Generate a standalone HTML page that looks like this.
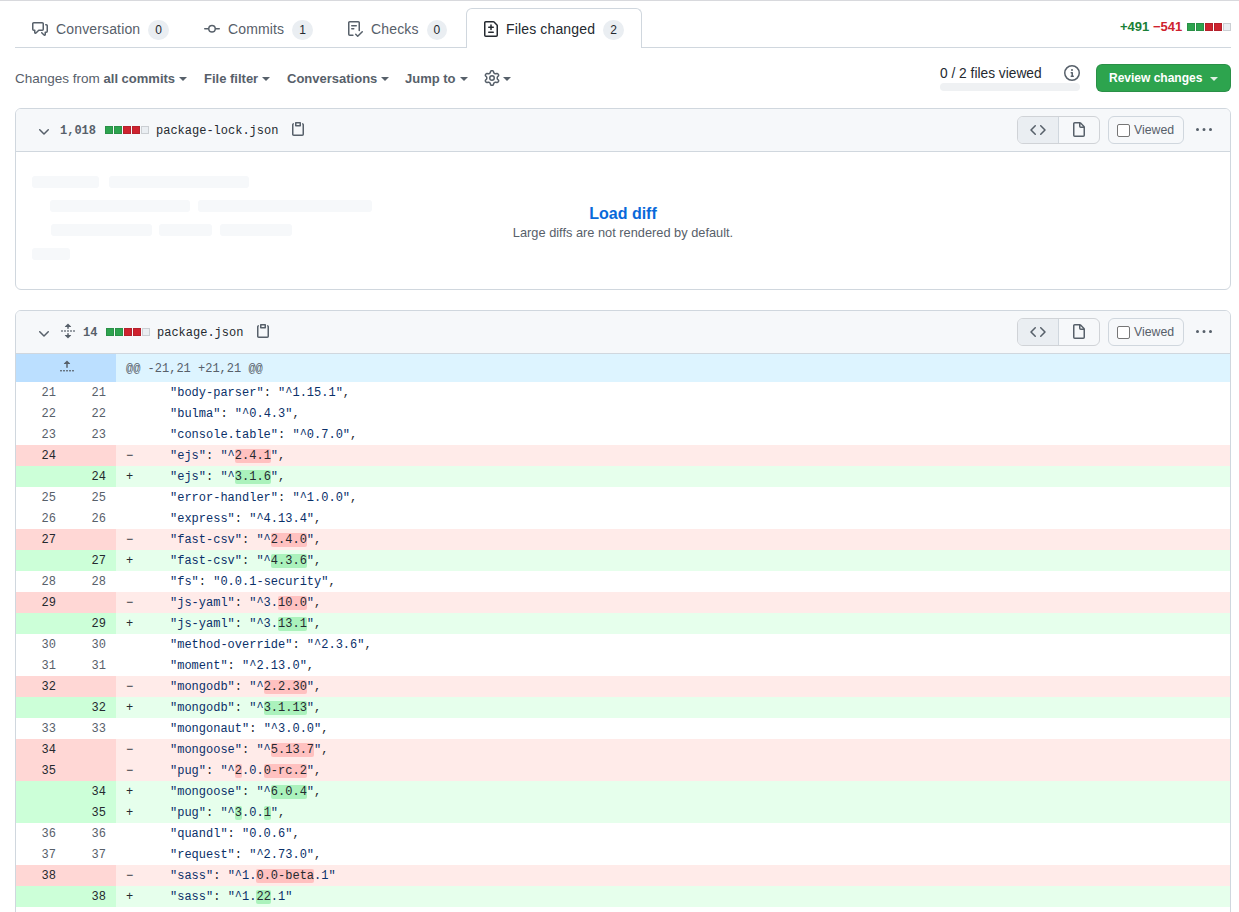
<!DOCTYPE html>
<html><head><meta charset="utf-8">
<style>
*{box-sizing:border-box}
html,body{margin:0;padding:0;background:#fff;width:1239px;height:912px;overflow:hidden;font-family:"Liberation Sans",sans-serif;color:#24292f}
.abs{position:absolute}
svg{display:block}
.topline{position:absolute;left:0;top:0;width:1239px;height:1px;background:#d8d9dd}
.tabline{position:absolute;left:15px;top:47px;width:1216px;height:1px;background:#d0d7de}
.tab{position:absolute;top:8px;height:40px;display:flex;align-items:center;padding-top:2px;font-size:14px;letter-spacing:.15px;color:#57606a;white-space:nowrap}
.tab .ic{fill:#57606a;margin-right:8px}
.tab.sel{border:1px solid #d0d7de;border-bottom:none;border-radius:6px 6px 0 0;background:#fff;color:#24292f;height:40px;padding-top:1px}
.tab.sel .ic{fill:#24292f;margin-right:7px}
.badge{display:inline-block;min-width:20px;height:20px;line-height:20px;padding:0 7px;border-radius:10px;background:#eaeef2;color:#24292f;font-size:12px;letter-spacing:0;text-align:center;margin-left:8px;margin-top:2px}
.tb{position:absolute;top:65px;height:28px;line-height:28px;font-size:13.5px;color:#57606a;white-space:nowrap}
.tb b{font-weight:bold;font-size:13px}
.caret{display:inline-block;width:0;height:0;border-left:4px solid transparent;border-right:4px solid transparent;border-top:4px solid #57606a;vertical-align:middle;margin-left:4px;margin-top:0}
.file{position:absolute;left:15px;width:1216px;border:1px solid #d0d7de;border-radius:6px;background:#fff;overflow:hidden}
.fh{position:absolute;left:0;top:0;width:1214px;height:43px;background:#f6f8fa;border-bottom:1px solid #d0d7de}
.mono{font-family:"Liberation Mono",monospace}
.sq{position:absolute;width:8px;height:8px}
.g{background:#2da44e;outline:1px solid rgba(27,31,36,.15);outline-offset:-1px}
.r{background:#cf222e;outline:1px solid rgba(27,31,36,.15);outline-offset:-1px}
.n{background:#eaeef2;outline:1px solid rgba(27,31,36,.15);outline-offset:-1px}
.btng{position:absolute;height:28px;border:1px solid #d0d7de;border-radius:6px;overflow:hidden;background:#fff}
.sk{position:absolute;height:12px;border-radius:3px;background:#f6f8fa}
.rows{position:absolute;left:0;width:1214px}
.row{position:relative;height:21px;font-family:"Liberation Mono",monospace;font-size:12px;line-height:23px;white-space:pre}
.ln{position:absolute;top:0;width:50px;height:21px;text-align:right;padding-right:10px;color:#57606a}
.ln1{left:0}.ln2{left:50px}
.code{position:absolute;left:100px;top:0;right:0;height:21px;color:#24292f}
.mk{position:absolute;left:10px;top:0}
.txt{position:absolute;left:54px;top:0}
.del .ln{background:#ffd7d5;color:#24292f}
.del .code{background:#ffebe9}
.add .ln{background:#ccffd8;color:#24292f}
.add .code{background:#e6ffec}
.s{color:#0a3069}
.xd{background:rgba(255,129,130,.4);border-radius:2px}
.xa{background:#abf2bc;border-radius:2px}
</style></head><body>
<div class="topline"></div>
<div class="tabline"></div>

<!-- tabs -->
<div class="tab" style="left:16px;padding-left:16px">
<svg class="ic" width="16" height="16" viewBox="0 0 16 16"><path d="M1.75 1h8.5c.966 0 1.75.784 1.75 1.75v5.5A1.75 1.75 0 0 1 10.25 10H7.061l-2.574 2.573A1.458 1.458 0 0 1 2 11.543V10h-.25A1.75 1.75 0 0 1 0 8.25v-5.5C0 1.784.784 1 1.750 1ZM1.5 2.75v5.5c0 .138.112.25.25.25h1a.75.75 0 0 1 .75.75v2.19l2.72-2.720a.749.749 0 0 1 .53-.22h3.5a.25.25 0 0 0 .25-.25v-5.5a.25.25 0 0 0-.25-.25h-8.5a.25.25 0 0 0-.25.25Zm13 2a.25.25 0 0 0-.25-.25h-.5a.75.75 0 0 1 0-1.5h.5c.966 0 1.75.784 1.75 1.75v5.5A1.75 1.75 0 0 1 14.25 12H14v1.543a1.458 1.458 0 0 1-2.487 1.030L9.22 12.28a.749.749 0 0 1 .326-1.275.749.749 0 0 1 .734.215l2.22 2.22v-2.19a.75.75 0 0 1 .75-.75h1a.25.25 0 0 0 .25-.25Z"/></svg>
<span>Conversation</span><span class="badge">0</span></div>

<div class="tab" style="left:188px;padding-left:16px">
<svg class="ic" width="16" height="16" viewBox="0 0 16 16"><path d="M11.93 8.5a4.002 4.002 0 0 1-7.86 0H.75a.75.75 0 0 1 0-1.5h3.32a4.002 4.002 0 0 1 7.86 0h3.32a.75.75 0 0 1 0 1.5Zm-1.43-.75a2.5 2.5 0 1 0-5 0 2.5 2.5 0 0 0 5 0Z"/></svg>
<span>Commits</span><span class="badge">1</span></div>

<div class="tab" style="left:331px;padding-left:16px">
<svg class="ic" width="16" height="16" viewBox="0 0 16 16"><path d="M2.5 1.75v11.5c0 .138.112.25.25.25h3.17a.75.75 0 0 1 0 1.5H2.75A1.75 1.75 0 0 1 1 13.25V1.75C1 .784 1.784 0 2.75 0h8.5C12.216 0 13 .784 13 1.75v7.736a.75.75 0 0 1-1.5 0V1.75a.25.25 0 0 0-.25-.25h-8.5a.25.25 0 0 0-.25.25Zm13.274 9.537v-.001l-4.557 4.45a.75.75 0 0 1-1.055-.008l-1.943-1.95a.75.75 0 0 1 1.062-1.058l1.419 1.425 4.026-3.932a.75.75 0 1 1 1.048 1.074ZM4.75 4h4.5a.75.75 0 0 1 0 1.5h-4.5a.75.75 0 0 1 0-1.5ZM4 7.75A.75.75 0 0 1 4.75 7h2a.75.75 0 0 1 0 1.5h-2A.75.75 0 0 1 4 7.75Z"/></svg>
<span>Checks</span><span class="badge">0</span></div>

<div class="tab sel" style="left:466px;width:176px;padding-left:16px">
<svg class="ic" width="16" height="16" viewBox="0 0 16 16"><path d="M1 1.75C1 .784 1.784 0 2.75 0h7.586c.464 0 .909.184 1.237.513l2.914 2.914c.329.328.513.773.513 1.237v9.586A1.75 1.75 0 0 1 13.25 16H2.75A1.75 1.75 0 0 1 1 14.25Zm1.75-.25a.25.25 0 0 0-.25.25v12.5c0 .138.112.25.25.25h10.5a.25.25 0 0 0 .25-.25V4.664a.25.25 0 0 0-.073-.177l-2.914-2.914a.25.25 0 0 0-.177-.073ZM8 3.25a.75.75 0 0 1 .75.75v1.5h1.5a.75.75 0 0 1 0 1.5h-1.5v1.5a.75.75 0 0 1-1.5 0V7h-1.5a.75.75 0 0 1 0-1.5h1.5V4A.75.75 0 0 1 8 3.25Zm-3 8a.75.75 0 0 1 .75-.75h4.5a.75.75 0 0 1 0 1.5h-4.5a.75.75 0 0 1-.75-.75Z"/></svg>
<span>Files changed</span><span class="badge">2</span></div>

<div class="abs" style="left:1120px;top:17px;font-size:13px;font-weight:bold;line-height:20px;white-space:nowrap"><span style="color:#1a7f37">+491</span> <span style="color:#cf222e">&minus;541</span></div>
<div class="sq g" style="left:1187px;top:23px"></div>
<div class="sq g" style="left:1196px;top:23px"></div>
<div class="sq r" style="left:1205px;top:23px"></div>
<div class="sq r" style="left:1214px;top:23px"></div>
<div class="sq n" style="left:1223px;top:23px"></div>

<!-- toolbar -->
<div class="tb" style="left:15px">Changes from <b>all commits</b><span class="caret"></span></div>
<div class="tb" style="left:204px"><b>File filter</b><span class="caret"></span></div>
<div class="tb" style="left:287px"><b>Conversations</b><span class="caret"></span></div>
<div class="tb" style="left:405px"><b>Jump to</b><span class="caret"></span></div>
<div class="abs" style="left:484px;top:70px"><svg width="16" height="16" viewBox="0 0 16 16" fill="#57606a"><path d="M8 0a8.2 8.2 0 0 1 .701.031C9.444.095 9.99.645 10.16 1.29l.288 1.107c.018.066.079.158.212.224.231.114.454.243.668.386.123.082.233.09.299.071l1.103-.303c.644-.176 1.392.021 1.82.63.27.385.506.792.704 1.218.315.675.111 1.422-.364 1.891l-.814.806c-.049.048-.098.147-.088.294.016.257.016.515 0 .772-.01.147.038.246.088.294l.814.806c.475.469.679 1.216.364 1.891a7.977 7.977 0 0 1-.704 1.217c-.428.61-1.176.807-1.820.63l-1.102-.302c-.067-.019-.177-.011-.3.071a5.909 5.909 0 0 1-.668.386c-.133.066-.194.158-.211.224l-.29 1.106c-.168.646-.715 1.196-1.458 1.26a8.006 8.006 0 0 1-1.402 0c-.743-.064-1.289-.614-1.458-1.26l-.289-1.106c-.018-.066-.079-.158-.212-.224a5.738 5.738 0 0 1-.668-.386c-.123-.082-.233-.09-.299-.071l-1.103.303c-.644.176-1.392-.021-1.82-.63a8.12 8.12 0 0 1-.704-1.218c-.315-.675-.111-1.422.363-1.891l.815-.806c.05-.048.098-.147.088-.294a6.214 6.214 0 0 1 0-.772c.01-.147-.038-.246-.088-.294l-.815-.806C.635 6.045.431 5.298.746 4.623a7.92 7.92 0 0 1 .704-1.217c.428-.61 1.176-.807 1.82-.63l1.102.302c.067.019.177.011.3-.071.214-.143.437-.272.668-.386.133-.066.194-.158.211-.224l.29-1.106C6.009.645 6.556.095 7.299.03 7.53.01 7.764 0 8 0Zm-.571 1.525c-.036.003-.108.036-.137.146l-.289 1.105c-.147.561-.549.967-.998 1.189-.173.086-.34.183-.5.29-.417.278-.97.423-1.529.27l-1.103-.303c-.109-.03-.175.016-.195.045-.22.312-.412.644-.573.99-.014.031-.021.11.059.19l.815.806c.411.406.562.957.53 1.456a4.709 4.709 0 0 0 0 .582c.032.499-.119 1.05-.53 1.456l-.815.806c-.081.08-.073.159-.059.19.162.346.353.677.573.989.02.03.085.076.195.046l1.102-.303c.56-.153 1.113-.008 1.53.27.161.107.328.204.501.29.447.222.850.629.997 1.189l.289 1.105c.029.109.101.143.137.146a6.6 6.6 0 0 0 1.142 0c.036-.003.108-.036.137-.146l.289-1.105c.147-.561.549-.967.998-1.189.173-.086.34-.183.5-.29.417-.278.97-.423 1.529-.27l1.103.303c.109.029.175-.016.195-.045.22-.313.411-.644.573-.99.014-.031.021-.11-.059-.19l-.815-.806c-.411-.406-.562-.957-.53-1.456a4.709 4.709 0 0 0 0-.582c-.032-.499.119-1.05.53-1.456l.815-.806c.081-.08.073-.159.059-.19a6.464 6.464 0 0 0-.573-.989c-.02-.03-.085-.076-.195-.046l-1.102.303c-.56.153-1.113.008-1.53-.27a4.44 4.44 0 0 0-.501-.29c-.447-.222-.85-.629-.997-1.189l-.289-1.105c-.029-.11-.101-.143-.137-.146a6.6 6.6 0 0 0-1.142 0ZM11 8a3 3 0 1 1-6 0 3 3 0 0 1 6 0ZM9.5 8a1.5 1.5 0 1 0-3.001.001A1.5 1.5 0 0 0 9.5 8Z"/></svg></div>
<span class="caret abs" style="left:499px;top:77px"></span>

<div class="abs" style="left:940px;top:65px;font-size:13.75px;line-height:18px;color:#24292f;white-space:nowrap">0 / 2 files viewed</div>
<div class="abs" style="left:940px;top:83px;width:140px;height:8px;border-radius:4px;background:#eff1f3"></div>
<div class="abs" style="left:1064px;top:65px"><svg width="16" height="16" viewBox="0 0 16 16" fill="#57606a"><path d="M0 8a8 8 0 1 1 16 0A8 8 0 0 1 0 8Zm8-6.5a6.5 6.5 0 1 0 0 13 6.5 6.5 0 0 0 0-13ZM6.5 7.75A.75.75 0 0 1 7.25 7h1a.75.75 0 0 1 .75.75v2.75h.25a.75.75 0 0 1 0 1.5h-2a.75.75 0 0 1 0-1.5h.25v-2h-.25a.75.75 0 0 1-.75-.75ZM8 6a1 1 0 1 1 0-2 1 1 0 0 1 0 2Z"/></svg></div>
<div class="abs" style="left:1096px;top:64px;width:135px;height:28px;border-radius:6px;background:#2da44e;border:1px solid rgba(27,31,36,.15);color:#fff;font-size:12px;font-weight:bold;line-height:26px;padding-left:12px;white-space:nowrap">Review changes<span class="caret" style="border-top-color:rgba(255,255,255,.85);margin-left:8px"></span></div>

<div class="file" style="top:108px;height:182px"><div class="fh"><svg class="abs" style="left:20px;top:15px" width="16" height="16" viewBox="0 0 16 16" fill="#57606a"><path d="M12.78 5.22a.749.749 0 0 1 0 1.06l-4.25 4.25a.749.749 0 0 1-1.06 0L3.22 6.28a.749.749 0 0 1 .326-1.275.749.749 0 0 1 .734.215L8 8.939l3.72-3.719a.749.749 0 0 1 1.06 0Z"/></svg><div class="abs mono" style="left:44px;top:10px;font-size:12px;font-weight:bold;line-height:24px;color:#57606a">1,018</div><div class="sq g" style="left:89px;top:17px"></div><div class="sq g" style="left:98px;top:17px"></div><div class="sq r" style="left:107px;top:17px"></div><div class="sq r" style="left:116px;top:17px"></div><div class="sq n" style="left:125px;top:17px"></div><div class="abs mono" style="left:140px;top:10px;font-size:12px;line-height:24px;color:#24292f">package-lock.json</div><svg class="abs" style="left:274px;top:12px" width="16" height="16" viewBox="0 0 16 16" fill="#57606a"><path d="M5.75 1a.75.75 0 0 0-.75.75v3c0 .414.336.75.75.75h4.5a.75.75 0 0 0 .75-.75v-3a.75.75 0 0 0-.75-.75h-4.5Zm.75 3V2.5h3V4h-3Zm-2.874-.467a.75.75 0 0 0-.752-1.298A1.75 1.75 0 0 0 2 3.75v9.5c0 .966.784 1.75 1.75 1.75h8.5A1.75 1.75 0 0 0 14 13.25v-9.5a1.75 1.75 0 0 0-.874-1.515.75.75 0 1 0-.752 1.298.25.25 0 0 1 .126.217v9.5a.25.25 0 0 1-.25.25h-8.5a.25.25 0 0 1-.25-.25v-9.5a.25.25 0 0 1 .126-.217Z"/></svg><div class="btng" style="left:1001px;top:7px;width:83px;background:#f6f8fa;border-color:#d0d3d7"><div class="abs" style="left:0;top:0;width:41px;height:26px;background:#eaeef2;border-right:1px solid #d0d7de"></div><svg class="abs" style="left:12px;top:5px" width="16" height="16" viewBox="0 0 16 16" fill="#57606a"><path d="m11.28 3.22 4.25 4.25a.75.75 0 0 1 0 1.06l-4.25 4.25a.749.749 0 0 1-1.275-.326.749.749 0 0 1 .215-.734L13.94 8l-3.72-3.72a.749.749 0 0 1 .326-1.275.749.749 0 0 1 .734.215Zm-6.56 0a.751.751 0 0 1 1.042.018.751.751 0 0 1 .018 1.042L2.06 8l3.72 3.72a.749.749 0 0 1-.326 1.275.749.749 0 0 1-.734-.215L.47 8.53a.75.75 0 0 1 0-1.06Z"/></svg><svg class="abs" style="left:53px;top:5px" width="16" height="16" viewBox="0 0 16 16" fill="#57606a"><path d="M3.75 1.5a.25.25 0 0 0-.25.25v11.5c0 .138.112.25.25.25h8.5a.25.25 0 0 0 .25-.25V6H9.75A1.75 1.75 0 0 1 8 4.25V1.5H3.75zm5.75.56v2.19c0 .138.112.25.25.25h2.19L9.5 2.06zM2 1.75C2 .784 2.784 0 3.75 0h5.086c.464 0 .909.184 1.237.513l3.414 3.414c.329.328.513.773.513 1.237v8.086A1.75 1.75 0 0 1 12.25 15h-8.5A1.75 1.75 0 0 1 2 13.25V1.75z"/></svg></div><div class="btng" style="left:1092px;top:7px;width:76px;background:#f6f8fa"><div class="abs" style="left:8px;top:7px;width:13px;height:13px;border:1px solid #767676;border-radius:2px;background:#fff"></div><div class="abs" style="left:25px;top:0;font-size:12.3px;line-height:26px;color:#57606a">Viewed</div></div><svg class="abs" style="left:1180px;top:13px" width="16" height="16" viewBox="0 0 16 16" fill="#57606a"><path d="M8 9a1.5 1.5 0 1 0 0-3 1.5 1.5 0 0 0 0 3ZM1.5 9a1.5 1.5 0 1 0 0-3 1.5 1.5 0 0 0 0 3Zm13 0a1.5 1.5 0 1 0 0-3 1.5 1.5 0 0 0 0 3Z"/></svg></div><div class="sk" style="left:16px;top:67px;width:67px"></div><div class="sk" style="left:93px;top:67px;width:140px"></div><div class="sk" style="left:34px;top:91px;width:140px"></div><div class="sk" style="left:182px;top:91px;width:174px"></div><div class="sk" style="left:35px;top:115px;width:101px"></div><div class="sk" style="left:143px;top:115px;width:53px"></div><div class="sk" style="left:204px;top:115px;width:72px"></div><div class="sk" style="left:16px;top:139px;width:38px"></div><div class="abs" style="left:0;top:95px;width:1214px;text-align:center;font-size:16px;font-weight:bold;color:#0969da;line-height:20px">Load diff</div><div class="abs" style="left:0;top:115px;width:1214px;text-align:center;font-size:12.8px;color:#57606a;line-height:18px">Large diffs are not rendered by default.</div></div><div class="file" style="top:310px;height:640px"><div class="fh"><svg class="abs" style="left:20px;top:15px" width="16" height="16" viewBox="0 0 16 16" fill="#57606a"><path d="M12.78 5.22a.749.749 0 0 1 0 1.06l-4.25 4.25a.749.749 0 0 1-1.06 0L3.22 6.28a.749.749 0 0 1 .326-1.275.749.749 0 0 1 .734.215L8 8.939l3.72-3.719a.749.749 0 0 1 1.06 0Z"/></svg><svg class="abs" style="left:44px;top:12px" width="16" height="16" viewBox="0 0 16 16" fill="#57606a"><path d="m8.177.677 2.896 2.896a.25.25 0 0 1-.177.427H8.75v1.25a.75.75 0 0 1-1.5 0V4H5.104a.25.25 0 0 1-.177-.427L7.823.677a.25.25 0 0 1 .354 0ZM7.25 10.75a.75.75 0 0 1 1.5 0V12h2.146a.25.25 0 0 1 .177.427l-2.896 2.896a.25.25 0 0 1-.354 0l-2.896-2.896A.25.25 0 0 1 5.104 12H7.25v-1.25Zm-5-2a.75.75 0 0 0 0-1.5h-.5a.75.75 0 0 0 0 1.5h.5ZM6 8a.75.75 0 0 1-.75.75h-.5a.75.75 0 0 1 0-1.5h.5A.75.75 0 0 1 6 8Zm2.25.75a.75.75 0 0 0 0-1.5h-.5a.75.75 0 0 0 0 1.5h.5ZM12 8a.75.75 0 0 1-.75.75h-.5a.75.75 0 0 1 0-1.5h.5A.75.75 0 0 1 12 8Zm2.25.75a.75.75 0 0 0 0-1.5h-.5a.75.75 0 0 0 0 1.5h.5Z"/></svg><div class="abs mono" style="left:67px;top:10px;font-size:12px;font-weight:bold;line-height:24px;color:#57606a">14</div><div class="sq g" style="left:90px;top:17px"></div><div class="sq g" style="left:99px;top:17px"></div><div class="sq r" style="left:108px;top:17px"></div><div class="sq r" style="left:117px;top:17px"></div><div class="sq n" style="left:126px;top:17px"></div><div class="abs mono" style="left:141px;top:10px;font-size:12px;line-height:24px;color:#24292f">package.json</div><svg class="abs" style="left:239px;top:12px" width="16" height="16" viewBox="0 0 16 16" fill="#57606a"><path d="M5.75 1a.75.75 0 0 0-.75.75v3c0 .414.336.75.75.75h4.5a.75.75 0 0 0 .75-.75v-3a.75.75 0 0 0-.75-.75h-4.5Zm.75 3V2.5h3V4h-3Zm-2.874-.467a.75.75 0 0 0-.752-1.298A1.75 1.75 0 0 0 2 3.75v9.5c0 .966.784 1.75 1.75 1.75h8.5A1.75 1.75 0 0 0 14 13.25v-9.5a1.75 1.75 0 0 0-.874-1.515.75.75 0 1 0-.752 1.298.25.25 0 0 1 .126.217v9.5a.25.25 0 0 1-.25.25h-8.5a.25.25 0 0 1-.25-.25v-9.5a.25.25 0 0 1 .126-.217Z"/></svg><div class="btng" style="left:1001px;top:7px;width:83px;background:#f6f8fa;border-color:#d0d3d7"><div class="abs" style="left:0;top:0;width:41px;height:26px;background:#eaeef2;border-right:1px solid #d0d7de"></div><svg class="abs" style="left:12px;top:5px" width="16" height="16" viewBox="0 0 16 16" fill="#57606a"><path d="m11.28 3.22 4.25 4.25a.75.75 0 0 1 0 1.06l-4.25 4.25a.749.749 0 0 1-1.275-.326.749.749 0 0 1 .215-.734L13.94 8l-3.72-3.72a.749.749 0 0 1 .326-1.275.749.749 0 0 1 .734.215Zm-6.56 0a.751.751 0 0 1 1.042.018.751.751 0 0 1 .018 1.042L2.06 8l3.72 3.72a.749.749 0 0 1-.326 1.275.749.749 0 0 1-.734-.215L.47 8.53a.75.75 0 0 1 0-1.06Z"/></svg><svg class="abs" style="left:53px;top:5px" width="16" height="16" viewBox="0 0 16 16" fill="#57606a"><path d="M3.75 1.5a.25.25 0 0 0-.25.25v11.5c0 .138.112.25.25.25h8.5a.25.25 0 0 0 .25-.25V6H9.75A1.75 1.75 0 0 1 8 4.25V1.5H3.75zm5.75.56v2.19c0 .138.112.25.25.25h2.19L9.5 2.06zM2 1.75C2 .784 2.784 0 3.75 0h5.086c.464 0 .909.184 1.237.513l3.414 3.414c.329.328.513.773.513 1.237v8.086A1.75 1.75 0 0 1 12.25 15h-8.5A1.75 1.75 0 0 1 2 13.25V1.75z"/></svg></div><div class="btng" style="left:1092px;top:7px;width:76px;background:#f6f8fa"><div class="abs" style="left:8px;top:7px;width:13px;height:13px;border:1px solid #767676;border-radius:2px;background:#fff"></div><div class="abs" style="left:25px;top:0;font-size:12.3px;line-height:26px;color:#57606a">Viewed</div></div><svg class="abs" style="left:1180px;top:13px" width="16" height="16" viewBox="0 0 16 16" fill="#57606a"><path d="M8 9a1.5 1.5 0 1 0 0-3 1.5 1.5 0 0 0 0 3ZM1.5 9a1.5 1.5 0 1 0 0-3 1.5 1.5 0 0 0 0 3Zm13 0a1.5 1.5 0 1 0 0-3 1.5 1.5 0 0 0 0 3Z"/></svg></div><div class="abs" style="left:0;top:43px;width:100px;height:28px;background:#bbdfff"></div><div class="abs" style="left:100px;top:43px;width:1114px;height:28px;background:#ddf4ff"></div><svg class="abs" style="left:43px;top:48px" width="16" height="16" viewBox="0 0 16 16" fill="#57606a"><path d="M7.823 1.677 4.927 4.573A.25.25 0 0 0 5.104 5H7.25v3.236a.75.75 0 1 0 1.5 0V5h2.146a.25.25 0 0 0 .177-.427L8.177 1.677a.25.25 0 0 0-.354 0ZM13.75 11a.75.75 0 0 0 0 1.5h.5a.75.75 0 0 0 0-1.5h-.5Zm-3.75.75a.75.75 0 0 1 .75-.75h.5a.75.75 0 0 1 0 1.5h-.5a.75.75 0 0 1-.75-.75ZM7.75 11a.75.75 0 0 0 0 1.5h.5a.75.75 0 0 0 0-1.5h-.5ZM4 11.75a.75.75 0 0 1 .75-.75h.5a.75.75 0 0 1 0 1.5h-.5a.75.75 0 0 1-.75-.75ZM1.75 11a.75.75 0 0 0 0 1.5h.5a.75.75 0 0 0 0-1.5h-.5Z"/></svg><div class="abs mono" style="left:110px;top:44px;font-size:12px;line-height:29px;color:#57606a;white-space:pre">@@ -21,21 +21,21 @@</div><div class="rows" style="top:71px"><div class="row"><div class="ln ln1">21</div><div class="ln ln2">21</div><div class="code"><span class="mk"></span><span class="txt"><span class="s">&quot;body-parser&quot;</span>: <span class="s">&quot;^1.15.1&quot;</span>,</span></div></div><div class="row"><div class="ln ln1">22</div><div class="ln ln2">22</div><div class="code"><span class="mk"></span><span class="txt"><span class="s">&quot;bulma&quot;</span>: <span class="s">&quot;^0.4.3&quot;</span>,</span></div></div><div class="row"><div class="ln ln1">23</div><div class="ln ln2">23</div><div class="code"><span class="mk"></span><span class="txt"><span class="s">&quot;console.table&quot;</span>: <span class="s">&quot;^0.7.0&quot;</span>,</span></div></div><div class="row del"><div class="ln ln1">24</div><div class="ln ln2"></div><div class="code"><span class="mk">&minus;</span><span class="txt"><span class="s">&quot;ejs&quot;</span>: <span class="s">&quot;^<span class="xd" style="color:#24292f">2.4.1</span>&quot;</span>,</span></div></div><div class="row add"><div class="ln ln1"></div><div class="ln ln2">24</div><div class="code"><span class="mk">+</span><span class="txt"><span class="s">&quot;ejs&quot;</span>: <span class="s">&quot;^<span class="xa" style="color:#24292f">3.1.6</span>&quot;</span>,</span></div></div><div class="row"><div class="ln ln1">25</div><div class="ln ln2">25</div><div class="code"><span class="mk"></span><span class="txt"><span class="s">&quot;error-handler&quot;</span>: <span class="s">&quot;^1.0.0&quot;</span>,</span></div></div><div class="row"><div class="ln ln1">26</div><div class="ln ln2">26</div><div class="code"><span class="mk"></span><span class="txt"><span class="s">&quot;express&quot;</span>: <span class="s">&quot;^4.13.4&quot;</span>,</span></div></div><div class="row del"><div class="ln ln1">27</div><div class="ln ln2"></div><div class="code"><span class="mk">&minus;</span><span class="txt"><span class="s">&quot;fast-csv&quot;</span>: <span class="s">&quot;^<span class="xd" style="color:#24292f">2.4.0</span>&quot;</span>,</span></div></div><div class="row add"><div class="ln ln1"></div><div class="ln ln2">27</div><div class="code"><span class="mk">+</span><span class="txt"><span class="s">&quot;fast-csv&quot;</span>: <span class="s">&quot;^<span class="xa" style="color:#24292f">4.3.6</span>&quot;</span>,</span></div></div><div class="row"><div class="ln ln1">28</div><div class="ln ln2">28</div><div class="code"><span class="mk"></span><span class="txt"><span class="s">&quot;fs&quot;</span>: <span class="s">&quot;0.0.1-security&quot;</span>,</span></div></div><div class="row del"><div class="ln ln1">29</div><div class="ln ln2"></div><div class="code"><span class="mk">&minus;</span><span class="txt"><span class="s">&quot;js-yaml&quot;</span>: <span class="s">&quot;^3.<span class="xd" style="color:#24292f">10.0</span>&quot;</span>,</span></div></div><div class="row add"><div class="ln ln1"></div><div class="ln ln2">29</div><div class="code"><span class="mk">+</span><span class="txt"><span class="s">&quot;js-yaml&quot;</span>: <span class="s">&quot;^3.<span class="xa" style="color:#24292f">13.1</span>&quot;</span>,</span></div></div><div class="row"><div class="ln ln1">30</div><div class="ln ln2">30</div><div class="code"><span class="mk"></span><span class="txt"><span class="s">&quot;method-override&quot;</span>: <span class="s">&quot;^2.3.6&quot;</span>,</span></div></div><div class="row"><div class="ln ln1">31</div><div class="ln ln2">31</div><div class="code"><span class="mk"></span><span class="txt"><span class="s">&quot;moment&quot;</span>: <span class="s">&quot;^2.13.0&quot;</span>,</span></div></div><div class="row del"><div class="ln ln1">32</div><div class="ln ln2"></div><div class="code"><span class="mk">&minus;</span><span class="txt"><span class="s">&quot;mongodb&quot;</span>: <span class="s">&quot;^<span class="xd" style="color:#24292f">2.2.30</span>&quot;</span>,</span></div></div><div class="row add"><div class="ln ln1"></div><div class="ln ln2">32</div><div class="code"><span class="mk">+</span><span class="txt"><span class="s">&quot;mongodb&quot;</span>: <span class="s">&quot;^<span class="xa" style="color:#24292f">3.1.13</span>&quot;</span>,</span></div></div><div class="row"><div class="ln ln1">33</div><div class="ln ln2">33</div><div class="code"><span class="mk"></span><span class="txt"><span class="s">&quot;mongonaut&quot;</span>: <span class="s">&quot;^3.0.0&quot;</span>,</span></div></div><div class="row del"><div class="ln ln1">34</div><div class="ln ln2"></div><div class="code"><span class="mk">&minus;</span><span class="txt"><span class="s">&quot;mongoose&quot;</span>: <span class="s">&quot;^<span class="xd" style="color:#24292f">5.13.7</span>&quot;</span>,</span></div></div><div class="row del"><div class="ln ln1">35</div><div class="ln ln2"></div><div class="code"><span class="mk">&minus;</span><span class="txt"><span class="s">&quot;pug&quot;</span>: <span class="s">&quot;^<span class="xd" style="color:#24292f">2</span>.0.<span class="xd" style="color:#24292f">0-rc.2</span>&quot;</span>,</span></div></div><div class="row add"><div class="ln ln1"></div><div class="ln ln2">34</div><div class="code"><span class="mk">+</span><span class="txt"><span class="s">&quot;mongoose&quot;</span>: <span class="s">&quot;^<span class="xa" style="color:#24292f">6.0.4</span>&quot;</span>,</span></div></div><div class="row add"><div class="ln ln1"></div><div class="ln ln2">35</div><div class="code"><span class="mk">+</span><span class="txt"><span class="s">&quot;pug&quot;</span>: <span class="s">&quot;^<span class="xa" style="color:#24292f">3</span>.0.<span class="xa" style="color:#24292f">1</span>&quot;</span>,</span></div></div><div class="row"><div class="ln ln1">36</div><div class="ln ln2">36</div><div class="code"><span class="mk"></span><span class="txt"><span class="s">&quot;quandl&quot;</span>: <span class="s">&quot;0.0.6&quot;</span>,</span></div></div><div class="row"><div class="ln ln1">37</div><div class="ln ln2">37</div><div class="code"><span class="mk"></span><span class="txt"><span class="s">&quot;request&quot;</span>: <span class="s">&quot;^2.73.0&quot;</span>,</span></div></div><div class="row del"><div class="ln ln1">38</div><div class="ln ln2"></div><div class="code"><span class="mk">&minus;</span><span class="txt"><span class="s">&quot;sass&quot;</span>: <span class="s">&quot;^1.<span class="xd" style="color:#24292f">0.0-beta</span>.1&quot;</span></span></div></div><div class="row add"><div class="ln ln1"></div><div class="ln ln2">38</div><div class="code"><span class="mk">+</span><span class="txt"><span class="s">&quot;sass&quot;</span>: <span class="s">&quot;^1.<span class="xa" style="color:#24292f">22</span>.1&quot;</span></span></div></div><div class="row"><div class="ln ln1">39</div><div class="ln ln2">39</div><div class="code"><span class="mk"></span><span class="txt"><span class="s">&quot;serve-favicon&quot;</span>: <span class="s">&quot;^2.3.0&quot;</span>,</span></div></div></div></div></body></html>
